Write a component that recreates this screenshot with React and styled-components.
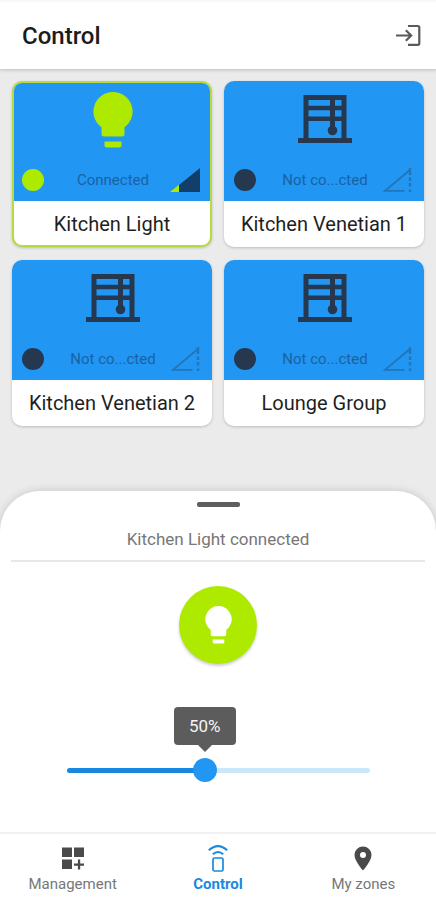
import React, { useState } from "react";
import styled, { createGlobalStyle } from "styled-components";

const GlobalStyle = createGlobalStyle`
  *, *::before, *::after { box-sizing: border-box; }
  body { margin: 0; background: #ebebeb; font-family: Roboto, "Noto Sans", sans-serif; }
  button, input { font: inherit; }
`;

const Screen = styled.div`
  display: flex;
  flex-direction: column;
  min-height: 100vh;
`;

const Header = styled.header`
  display: flex;
  align-items: center;
  justify-content: space-between;
  height: 70px;
  padding: 0 15px 0 22px;
  background: #fff;
  border-top: 2px solid #f7f7f7;
  border-bottom: 1px solid #cfcfcf;
  box-shadow: 0 1px 3px rgba(0, 0, 0, 0.12);
`;

const Title = styled.h1`
  margin: 0;
  color: #1c1c1c;
  font-size: 24px;
  line-height: 28px;
  font-weight: 500;
`;

const IconButton = styled.button`
  display: flex;
  padding: 0;
  border: 0;
  background: none;
  color: #5a5a5a;
  cursor: pointer;
`;

const CardGrid = styled.main`
  display: grid;
  grid-template-columns: 1fr 1fr;
  gap: 13px 12px;
  padding: 11px 12px 24px;
`;

const Card = styled.button`
  display: flex;
  flex-direction: column;
  height: 166px;
  padding: 0;
  overflow: hidden;
  text-align: center;
  background: #fff;
  border: ${(p) => (p.$active ? "2px solid #b5dc3c" : "0")};
  border-radius: 10px;
  box-shadow: 0 1px 3px rgba(0, 0, 0, 0.2);
  cursor: pointer;
`;

const CardFace = styled.span`
  display: flex;
  flex: 1;
  width: 100%;
  flex-direction: column;
  align-items: center;
  justify-content: space-between;
  padding: ${(p) => (p.$active ? "9px 10px 9px 8px" : "13px 12px 9px 10px")};
  background: #2196f3;
`;

const DeviceArt = styled.span`
  display: flex;
  padding-left: 3px;
  color: ${(p) => (p.$active ? "#aeea00" : "#26384f")};
`;

const StatusRow = styled.span`
  display: flex;
  width: 100%;
  align-items: center;
`;

const Dot = styled.span`
  width: 22px;
  height: 22px;
  border-radius: 50%;
  background: ${(p) => (p.$active ? "#aeea00" : "#26384f")};
`;

const Status = styled.span`
  flex: 1;
  padding-left: 12px;
  color: #1b62a3;
  font-size: 15px;
  line-height: 20px;
`;

const CardName = styled.span`
  width: 100%;
  padding: ${(p) => (p.$active ? "11px 0 9px" : "11px 0")};
  color: #1f1f1f;
  font-size: 20px;
  line-height: 24px;
`;

const Sheet = styled.section`
  display: flex;
  flex-direction: column;
  align-items: center;
  margin-top: auto;
  padding: 11px 11px 50px;
  background: #fff;
  border-radius: 40px 40px 0 0;
  box-shadow: 0 0 8px rgba(0, 0, 0, 0.16);
`;

const Handle = styled.span`
  width: 43px;
  height: 5px;
  border-radius: 2px;
  background: #5e5e5e;
`;

const SheetTitle = styled.h2`
  width: 100%;
  margin: 0;
  padding: 22px 0 11px;
  border-bottom: 2px solid #e8e8e8;
  color: #777;
  font-size: 17px;
  line-height: 20px;
  font-weight: 400;
  text-align: center;
`;

const PowerButton = styled.button`
  display: flex;
  align-items: center;
  justify-content: center;
  width: 78px;
  height: 78px;
  margin-top: 24px;
  padding: 0;
  border: 0;
  border-radius: 50%;
  background: #aeea00;
  color: #fff;
  box-shadow: 0 2px 3px rgba(0, 0, 0, 0.2);
  cursor: pointer;
`;

const SliderBox = styled.div`
  width: 100%;
  margin-top: 94px;
  padding: 0 55px 0 56px;
`;

const SliderArea = styled.div`
  position: relative;
  height: 24px;
`;

const Range = styled.input`
  display: block;
  width: 100%;
  height: 24px;
  margin: 0;
  appearance: none;
  background: none;
  cursor: pointer;

  &::-webkit-slider-runnable-track {
    height: 5px;
    border-radius: 3px;
    background: linear-gradient(to right, #1787e0 var(--fill), #cce6fa var(--fill));
  }
  &::-webkit-slider-thumb {
    appearance: none;
    width: 24px;
    height: 24px;
    margin-top: -10px;
    border-radius: 50%;
    background: #2196f3;
  }
`;

const Bubble = styled.output`
  position: absolute;
  bottom: 37px;
  width: 62px;
  padding: 9px 0;
  transform: translateX(-50%);
  border-radius: 4px;
  background: #5c5c5c;
  color: #f4f4f4;
  font-size: 17px;
  line-height: 20px;
  text-align: center;

  &::after {
    content: "";
    position: absolute;
    top: 100%;
    left: 50%;
    margin-left: -7px;
    border: 7px solid transparent;
    border-top-color: #5c5c5c;
    border-bottom-width: 0;
  }
`;

const Nav = styled.nav`
  display: grid;
  grid-template-columns: repeat(3, 1fr);
  height: 68px;
  background: #fff;
  border-top: 2px solid #f1f1f1;
`;

const NavLink = styled.a`
  display: flex;
  flex-direction: column;
  align-items: center;
  padding-top: 10px;
  gap: 3px;
  color: ${(p) => (p.$active ? "#1989df" : "#777")};
  font-size: 15px;
  line-height: 18px;
  font-weight: ${(p) => (p.$active ? 700 : 400)};
  text-decoration: none;
`;

const ExitIcon = () => (
  <svg width="26" height="26" viewBox="0 0 26 26" fill="none" stroke="currentColor" strokeWidth="2.200" aria-hidden="true">
    <path d="M13 3h9.800q1.500 0 1.500 1.500v15.800q0 1.500-1.500 1.500H13" />
    <path d="M1 12.500h15M10.800 7.200l5.400 5.300-5.400 5.300" />
  </svg>
);

const BulbIcon = ({ width, height }) => (
  <svg width={width} height={height} viewBox="0 0 40 56" fill="currentColor" aria-hidden="true">
    <path d="M20 0a19.500 19.500 0 0 0-11.500 35.300V42q0 2.500 2.500 2.500h18q2.500 0 2.500-2.500v-6.700A19.500 19.500 0 0 0 20 0z" />
    <path d="M11.500 49.500h17v4q0 2-2 2h-13q-2 0-2-2z" />
  </svg>
);

const BlindIcon = () => (
  <svg width="54" height="50" viewBox="0 0 54 50" fill="none" stroke="currentColor" aria-hidden="true">
    <path d="M0 46.500h54" strokeWidth="5" />
    <path d="M8 46V3.500h38V46" strokeWidth="5" />
    <path d="M8 14h38M8 24.800h38" strokeWidth="4.600" />
    <path d="M34.500 3v30" strokeWidth="5" />
    <circle cx="34.500" cy="36.500" r="4.800" fill="currentColor" stroke="none" />
  </svg>
);

const SignalIcon = ({ active }) =>
  active ? (
    <svg width="30" height="24" viewBox="0 0 30 24" aria-hidden="true">
      <path d="M30 0v24H9V17z" fill="#123f69" />
      <path d="M0 24l9-7.200V24z" fill="#aeea00" />
    </svg>
  ) : (
    <svg width="30" height="24" viewBox="0 0 30 24" fill="none" stroke="#2574b4" strokeWidth="1.800" aria-hidden="true">
      <path d="M22.500 22.800H3L28.500 1.500" />
      <path d="M28 0v7M28 9.500v3.500M28 15v3.500M28 21.500v2.500" strokeWidth="2.400" />
    </svg>
  );

const ManagementIcon = () => (
  <svg width="28" height="28" viewBox="0 0 28 28" fill="#4a4a4a" aria-hidden="true">
    <path d="M3 3.500h10v9.500H3zM15 3.500h10v9.500H15zM3 15.500h10V25H3z" />
    <path d="M18.900 15.500h2.300v3.900H25v2.300h-3.800v3.800h-2.300v-3.800H15v-2.300h3.900z" />
  </svg>
);

const RemoteIcon = () => (
  <svg width="28" height="28" viewBox="0 0 28 28" fill="none" stroke="#1989df" strokeWidth="2" aria-hidden="true">
    <rect x="9" y="14" width="10" height="13" rx="1.500" strokeWidth="1.700" />
    <path d="M8.800 10.300q5.200-4.600 10.400 0" />
    <path d="M4.800 6.300q9.200-8.400 18.400 0" />
  </svg>
);

const PinIcon = () => (
  <svg width="28" height="28" viewBox="0 0 28 28" fill="#4a4a4a" aria-hidden="true">
    <path fillRule="evenodd" d="M14 2.500a8.500 8.500 0 0 0-8.500 8.500c0 6 8.500 15.500 8.500 15.500s8.500-9.500 8.500-15.500A8.500 8.500 0 0 0 14 2.500zm0 5.500a3 3 0 1 1 0 6 3 3 0 0 1 0-6z" />
  </svg>
);

const devices = [
  { name: "Kitchen Light", active: true },
  { name: "Kitchen Venetian 1" },
  { name: "Kitchen Venetian 2" },
  { name: "Lounge Group" },
];

const tabs = [
  { label: "Management", Icon: ManagementIcon },
  { label: "Control", Icon: RemoteIcon, active: true },
  { label: "My zones", Icon: PinIcon },
];

const MAX_LEVEL = 111;

export default function App() {
  const [level, setLevel] = useState(50);
  const thumbCenter = `calc(12px + (100% - 24px) * ${level / MAX_LEVEL})`;

  return (
    <>
      <GlobalStyle />
      <Screen>
        <Header>
          <Title>Control</Title>
          <IconButton type="button" aria-label="Exit">
            <ExitIcon />
          </IconButton>
        </Header>
        <CardGrid>
          {devices.map(({ name, active }) => (
            <Card key={name} type="button" $active={active}>
              <CardFace $active={active}>
                <DeviceArt $active={active}>
                  {active ? <BulbIcon width="40" height="56" /> : <BlindIcon />}
                </DeviceArt>
                <StatusRow>
                  <Dot $active={active} />
                  <Status>{active ? "Connected" : "Not co...cted"}</Status>
                  <SignalIcon active={active} />
                </StatusRow>
              </CardFace>
              <CardName $active={active}>{name}</CardName>
            </Card>
          ))}
        </CardGrid>
        <Sheet>
          <Handle />
          <SheetTitle>Kitchen Light connected</SheetTitle>
          <PowerButton type="button" aria-label="Toggle Kitchen Light">
            <BulbIcon width="27" height="38" />
          </PowerButton>
          <SliderBox>
            <SliderArea>
              <Bubble htmlFor="brightness" style={{ left: thumbCenter }}>{level}%</Bubble>
              <Range
                id="brightness"
                type="range"
                aria-label="Brightness"
                min="0"
                max={MAX_LEVEL}
                value={level}
                onChange={(e) => setLevel(Number(e.target.value))}
                style={{ "--fill": thumbCenter }}
              />
            </SliderArea>
          </SliderBox>
        </Sheet>
        <Nav>
          {tabs.map(({ label, Icon, active }) => (
            <NavLink key={label} href="#" $active={active} aria-current={active ? "page" : undefined}>
              <Icon />
              {label}
            </NavLink>
          ))}
        </Nav>
      </Screen>
    </>
  );
}
